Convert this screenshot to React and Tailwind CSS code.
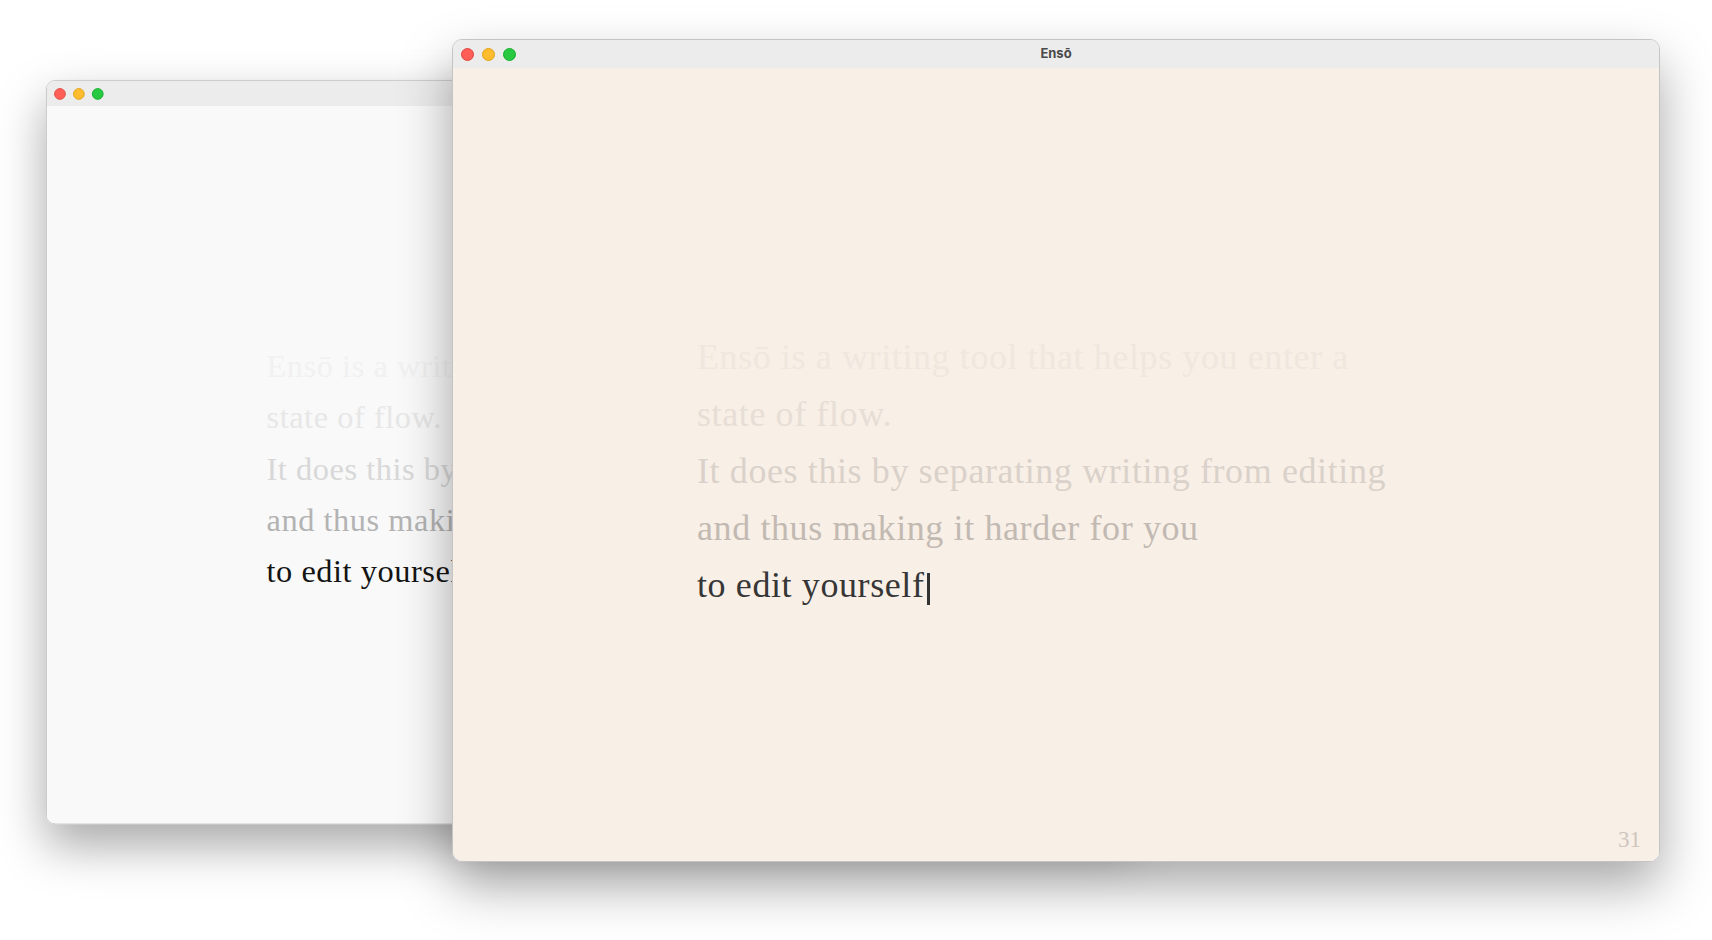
const LINES = [
  'Ensō is a writing tool that helps you enter a',
  'state of flow.',
  'It does this by separating writing from editing',
  'and thus making it harder for you',
  'to edit yourself',
]

const THEMES = {
  plain: {
    body: 'bg-[#f9f9f9]',
    lines: ['text-[#f1f1f1]', 'text-[#e7e7e7]', 'text-[#d8d8d8]', 'text-[#b3b3b3]', 'text-[#141414]'],
    count: '',
  },
  warm: {
    body: 'bg-[#f8efe7]',
    lines: ['text-[#f0e7df]', 'text-[#e7ded6]', 'text-[#dad2ca]', 'text-[#c2bab2]', 'text-[#363636]'],
    count: 'text-[#cec6be]',
  },
}

function TrafficLights() {
  return (
    <div className="flex items-center gap-2">
      <span className="w-[13px] h-[13px] rounded-full bg-[#ff5f57] border border-[#e2463f]" />
      <span className="w-[13px] h-[13px] rounded-full bg-[#febc2e] border border-[#e1a116]" />
      <span className="w-[13px] h-[13px] rounded-full bg-[#28c840] border border-[#14ae2a]" />
    </div>
  )
}

function EnsoWindow({ theme, title, count, cursor, className }) {
  const t = THEMES[theme]
  return (
    <div className={`absolute w-[1208px] rounded-[10px] overflow-hidden border border-[#c4c4c4] flex flex-col shadow-[0_24px_52px_rgba(0,0,0,0.34)] ${className}`}>
      <div className="relative h-[28px] shrink-0 bg-[#ececec] flex items-center px-[8px]">
        <TrafficLights />
        {title && (
          <span className="absolute inset-x-0 top-[4px] text-center text-[13px] font-bold text-[#4a4a4a] font-['Inter',sans-serif]">{title}</span>
        )}
      </div>
      <div className={`relative flex-1 ${t.body}`}>
        <div className="pl-[244px] pt-[261px] font-['Liberation_Serif',serif] text-[36px] leading-[57px] tracking-[0.6px] whitespace-nowrap">
          {LINES.map((line, i) => (
            <p key={i} className={t.lines[i]}>
              {line}
              {cursor && i === LINES.length - 1 && (
                <span className="inline-block align-[-8px] ml-[2px] w-[3px] h-[32px] bg-[#333]" />
              )}
            </p>
          ))}
        </div>
        {count && (
          <span className={`absolute right-[18px] bottom-[4px] font-['Liberation_Serif',serif] text-[23px] ${t.count}`}>{count}</span>
        )}
      </div>
    </div>
  )
}

export default function App() {
  return (
    <div className="relative w-[1712px] h-[940px] overflow-hidden bg-white">
      <EnsoWindow theme="plain" className="left-[46px] top-[80px] h-[827px] origin-top-left scale-90" />
      <EnsoWindow theme="warm" title="Ensō" count="31" cursor className="left-[452px] top-[39px] h-[823px]" />
    </div>
  )
}
